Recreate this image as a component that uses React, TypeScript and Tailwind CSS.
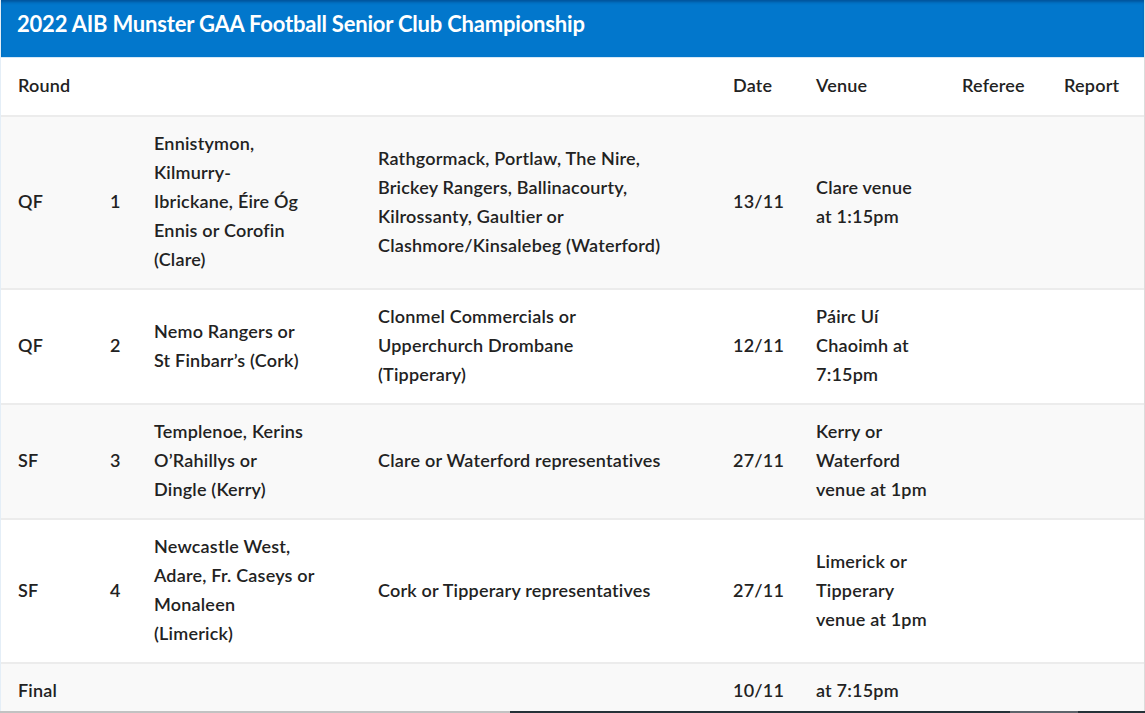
import React from "react";

type Row = {
  round: string;
  num: string;
  home: string[];
  away: string[];
  date: string;
  venue: string[];
};

const rows: Row[] = [
  {
    round: "QF",
    num: "1",
    home: ["Ennistymon,", "Kilmurry-", "Ibrickane, Éire Óg", "Ennis or Corofin", "(Clare)"],
    away: [
      "Rathgormack, Portlaw, The Nire,",
      "Brickey Rangers, Ballinacourty,",
      "Kilrossanty, Gaultier or",
      "Clashmore/Kinsalebeg (Waterford)",
    ],
    date: "13/11",
    venue: ["Clare venue", "at 1:15pm"],
  },
  {
    round: "QF",
    num: "2",
    home: ["Nemo Rangers or", "St Finbarr’s (Cork)"],
    away: ["Clonmel Commercials or", "Upperchurch Drombane", "(Tipperary)"],
    date: "12/11",
    venue: ["Páirc Uí", "Chaoimh at", "7:15pm"],
  },
  {
    round: "SF",
    num: "3",
    home: ["Templenoe, Kerins", "O’Rahillys or", "Dingle (Kerry)"],
    away: ["Clare or Waterford representatives"],
    date: "27/11",
    venue: ["Kerry or", "Waterford", "venue at 1pm"],
  },
  {
    round: "SF",
    num: "4",
    home: ["Newcastle West,", "Adare, Fr. Caseys or", "Monaleen", "(Limerick)"],
    away: ["Cork or Tipperary representatives"],
    date: "27/11",
    venue: ["Limerick or", "Tipperary", "venue at 1pm"],
  },
  {
    round: "Final",
    num: "",
    home: [],
    away: [],
    date: "10/11",
    venue: ["at 7:15pm"],
  },
];

function Lines({ lines }: { lines: string[] }) {
  return (
    <>
      {lines.map((l, i) => (
        <div key={i} className="whitespace-nowrap">
          {l}
        </div>
      ))}
    </>
  );
}

export default function App() {
  const td = "pl-[17px] pr-[19px] pt-[12px] pb-[14px] align-middle";
  return (
    <div
      className="relative w-[1145px] h-[713px] overflow-hidden bg-white text-[#222]"
      style={{ fontFamily: "Lato, 'Noto Sans', sans-serif" }}
    >
      <div className="border-l border-[#e4eef7] border-r border-r-[#dcdcdc] h-full flex flex-col">
        <div className="h-[58px] shrink-0 bg-[#0277cc] shadow-[inset_0_3px_3px_-1px_rgba(0,40,90,0.45)] flex items-center pl-[16px] border-b border-[#d5e8f7]">
          <h1 className="text-white font-bold text-[22px] tracking-[-0.2px] leading-none pb-[10px]">
            2022 AIB Munster GAA Football Senior Club Championship
          </h1>
        </div>
        <table className="table-fixed border-collapse w-full text-[18px] tracking-[0.2px] leading-[29px] font-semibold">
          <colgroup>
            <col className="w-[92px]" />
            <col className="w-[44px]" />
            <col className="w-[224px]" />
            <col className="w-[355px]" />
            <col className="w-[83px]" />
            <col className="w-[146px]" />
            <col className="w-[102px]" />
            <col />
          </colgroup>
          <thead>
            <tr className="h-[58px] border-b-2 border-[#ececec] bg-white">
              <th className={`${td} text-left font-semibold`}>Round</th>
              <th></th>
              <th></th>
              <th></th>
              <th className={`${td} text-left font-semibold`}>Date</th>
              <th className={`${td} text-left font-semibold`}>Venue</th>
              <th className={`${td} text-left font-semibold`}>Referee</th>
              <th className={`${td} text-left font-semibold`}>Report</th>
            </tr>
          </thead>
          <tbody>
            {rows.map((r, i) => (
              <tr
                key={i}
                className={`border-b-2 border-[#ececec] ${i % 2 === 0 ? "bg-[#f9f9f9]" : "bg-white"}`}
              >
                <td className={td}>{r.round}</td>
                <td className={td}>{r.num}</td>
                <td className={td}>
                  <Lines lines={r.home} />
                </td>
                <td className={td}>
                  <Lines lines={r.away} />
                </td>
                <td className={td}>{r.date}</td>
                <td className={td}>
                  <Lines lines={r.venue} />
                </td>
                <td className={td}></td>
                <td className={td}></td>
              </tr>
            ))}
          </tbody>
        </table>
      </div>
      <div className="absolute left-0 right-0 bottom-0 h-[2px] flex">
        <div className="w-[510px] bg-[#c2c2c2]" />
        <div className="w-[500px] bg-[#263238]" />
        <div className="w-[68px] bg-[#5d646b]" />
        <div className="flex-1 bg-[#263238]" />
      </div>
    </div>
  );
}
